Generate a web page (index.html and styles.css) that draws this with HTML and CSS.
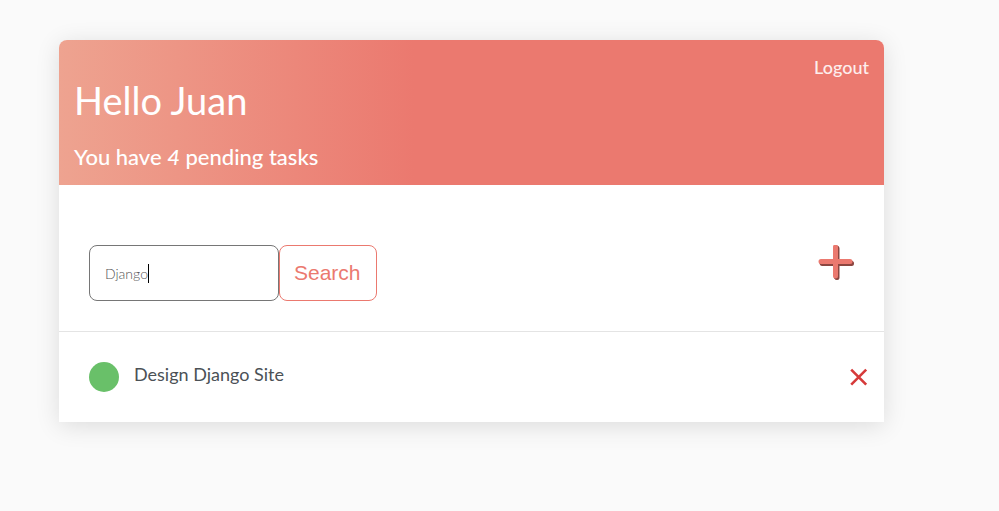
FILE: index.html
```html
<!DOCTYPE html>
<html lang="en">
<head>
<meta charset="utf-8">
<meta name="viewport" content="width=device-width, initial-scale=1">
<title>To Do List</title>
<link rel="stylesheet" href="styles.css">
</head>
<body>
<main class="card">
  <header class="banner">
    <div class="greeting">
      <h1>Hello Juan</h1>
      <h2>You have <i>4</i> pending tasks</h2>
    </div>
    <a class="logout" href="#">Logout</a>
  </header>
  <div class="toolbar">
    <form class="search">
      <div class="field">
        <input type="text" name="search-area" value="Django" aria-label="Search tasks">
        <span class="caret"></span>
      </div>
      <button type="submit">Search</button>
    </form>
    <a class="add" href="#" aria-label="Add task">
      <svg width="38" height="38" viewBox="0 0 38 38" fill="none" stroke-width="5" stroke-linecap="round">
        <path class="add-shade" d="M21 3.500v29M6.500 18.500h29"/>
        <path class="add-shade" d="M20.500 3v29M6 18h29"/>
        <path class="add-face" d="M19.500 2v29M5 16.500h29"/>
      </svg>
    </a>
  </div>
  <ul class="tasks">
    <li class="task">
      <span class="dot"></span>
      <a class="title" href="#">Design Django Site</a>
      <a class="delete" href="#" aria-label="Delete task">
        <svg width="18" height="18" viewBox="0 0 18 18" fill="none" stroke-width="2.600"><path d="M1.200 1.700l15 15M16.200 1.700L1.200 16.700"/></svg>
      </a>
    </li>
  </ul>
</main>
</body>
</html>
```
FILE: styles.css
```css
* {
  box-sizing: border-box;
}

body {
  margin: 0;
  background: #fafafa;
  color: #4b5156;
  font-family: Lato, sans-serif;
}

a {
  color: inherit;
  text-decoration: none;
}

svg {
  display: block;
}

.card {
  margin: 40px 115px 40px 59px;
  background: #fff;
  border-radius: 8px 8px 0 0;
  box-shadow: 0 4px 24px rgba(0, 0, 0, 0.12);
}

.banner {
  display: flex;
  justify-content: space-between;
  align-items: flex-start;
  padding: 16px 15px 12px;
  border-radius: 8px 8px 0 0;
  background: linear-gradient(90deg, #eea390 0%, #eb796f 43%, #eb796f 100%);
  color: #fff;
}

.greeting {
  padding-top: 22px;
}

h1 {
  margin: 0 0 20px;
  font-size: 38px;
  font-weight: 400;
  line-height: 44px;
}

h2 {
  margin: 0;
  padding-bottom: 1px;
  font-size: 22px;
  font-weight: 500;
  line-height: 30px;
}

.logout {
  color: #fdeeed;
  font-size: 18px;
  font-weight: 500;
  line-height: 22px;
}

.toolbar {
  display: flex;
  justify-content: space-between;
  align-items: flex-start;
  padding: 60px 30px 30px;
  border-bottom: 1px solid #e4e4e4;
}

.search {
  display: flex;
}

.field {
  position: relative;
}

.field input {
  width: 190px;
  height: 56px;
  padding: 0 15px;
  border: 1px solid #767676;
  border-radius: 8px;
  outline: none;
  background: #fff;
  color: #555;
  font: 300 14px Lato, sans-serif;
}

.caret {
  position: absolute;
  top: 19px;
  left: 59px;
  width: 1px;
  height: 19px;
  background: #000;
}

.search button {
  height: 56px;
  padding: 0 15px 0 14px;
  border: 1px solid #eb796f;
  border-radius: 8px;
  background: #fff;
  color: #eb796f;
  font: 21px "Liberation Sans", sans-serif;
}

.add-shade {
  stroke: #8c4640;
}

.add-face {
  stroke: #eb796f;
}

.tasks {
  margin: 0;
  padding: 0;
  list-style: none;
}

.task {
  display: flex;
  align-items: center;
  gap: 15px;
  padding: 30px 16px 30px 30px;
}

.dot {
  width: 30px;
  height: 30px;
  border-radius: 50%;
  background: #69c069;
}

.title {
  flex: 1;
  padding-bottom: 6px;
  font-size: 18px;
  line-height: 22px;
}

.delete {
  stroke: #d63a3a;
}
```
